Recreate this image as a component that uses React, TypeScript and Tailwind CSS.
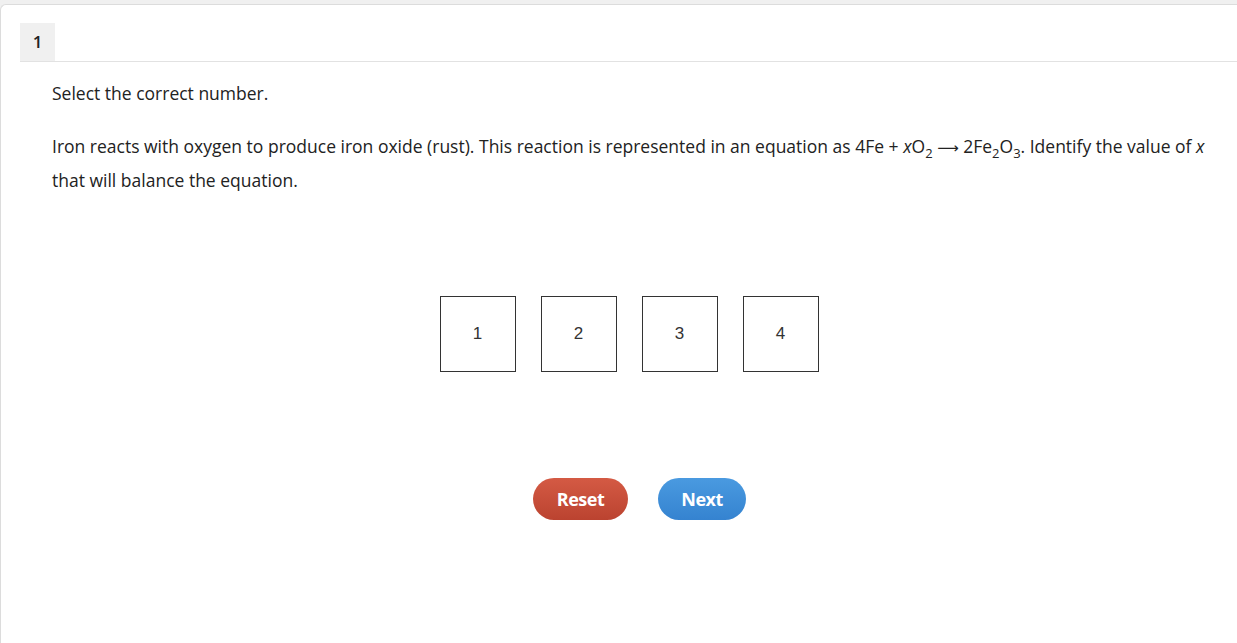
const App = () => {
  const choices = ["1", "2", "3", "4"];
  return (
    <div className="w-[1237px] h-[643px] overflow-hidden bg-[#f0f0f0] pt-[4px] font-['Open_Sans',sans-serif]">
      <div className="h-full ml-0 w-[1260px] bg-white border-l border-t border-[#dcdcdc] rounded-tl-[6px] pl-[19px] pt-[18px]">
        <div className="border-b border-[#e2e2e2] h-[39px] flex">
          <div className="w-[35px] h-[38px] bg-[#f0f0f0] flex items-center justify-center text-[17px] font-semibold text-[#222]">1</div>
        </div>
        <div className="w-[1218px]">
          <div className="pl-[32px] pr-[20px] text-[17.5px] text-[#222] leading-[34px]">
            <p className="mt-[14px]">Select the correct number.</p>
            <p className="mt-[19px]">
              Iron reacts with oxygen to produce iron oxide (rust). This reaction is represented in an equation as 4Fe + <i>x</i>O<span className="text-[13px] leading-none relative top-[5px]">2</span> <span className="font-['DejaVu_Sans',sans-serif] text-[15px] leading-none">⟶</span> 2Fe<span className="text-[13px] leading-none relative top-[5px]">2</span>O<span className="text-[13px] leading-none relative top-[5px]">3</span>. Identify the value of <i>x</i> that will balance the equation.
            </p>
          </div>
          <div className="mt-[99px] flex justify-center gap-[25px]">
            {choices.map((c) => (
              <div key={c} className="w-[76px] h-[76px] border border-[#333] flex items-center justify-center font-['Liberation_Sans',sans-serif] text-[17px] text-[#333]">
                {c}
              </div>
            ))}
          </div>
          <div className="mt-[106px] flex justify-center gap-[30px] pl-[21px]">
            <button className="w-[95px] h-[42px] rounded-full bg-gradient-to-b from-[#d45a44] to-[#bb4330] text-white font-bold text-[18px] tracking-[-0.5px]">Reset</button>
            <button className="w-[88px] h-[42px] rounded-full bg-gradient-to-b from-[#4a9ae0] to-[#3583d0] text-white font-bold text-[18px] tracking-[-0.5px]">Next</button>
          </div>
        </div>
      </div>
    </div>
  );
};
export default App;
